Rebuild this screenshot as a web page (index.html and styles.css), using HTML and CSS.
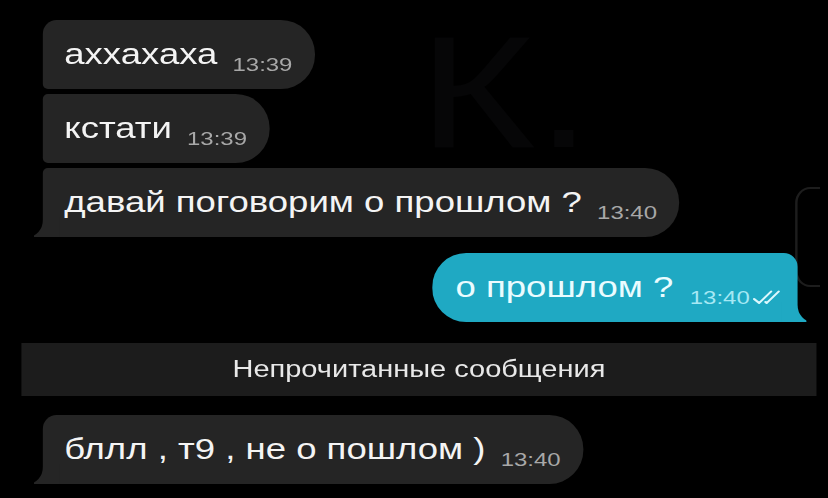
FILE: index.html
```html
<!DOCTYPE html>
<html>
	<head>
		<meta charset="utf-8">
		<title>Чат</title>
		<link rel="stylesheet" href="styles.css">
	</head>
	<body>
		<div class="chat">
			<div class="mark">К.</div>
			<div class="edge"></div>

			<div class="bubble in first">аххахаха<span class="time">13:39</span></div>
			<div class="bubble in middle">кстати<span class="time">13:39</span></div>
			<div class="bubble in last">давай поговорим о прошлом ?<span class="time">13:40</span></div>

			<div class="bubble out">о прошлом ?<span class="time">13:40</span><svg class="ticks" width="24" height="15" viewBox="0 0 24 15"><path d="M1.5 9 L5.5 13 L15 1.5 M10.5 12 L11.5 13 L21 1.5" fill="none" stroke="#dcf8fd" stroke-width="1.9" stroke-linecap="round" stroke-linejoin="round"/></svg></div>

			<div class="unread">Непрочитанные сообщения</div>

			<div class="bubble in single">бллл , т9 , не о пошлом )<span class="time">13:40</span></div>
		</div>
	</body>
</html>
```

FILE: styles.css
```css
*{
	margin: 0;
	padding: 0;
	box-sizing: border-box;
}
body{
	background: #000;
	overflow: hidden;
	font-family: "Liberation Sans", Arial, sans-serif;
}
/* the whole chat column is drawn wide */
.chat{
	width: 657px;
	padding: 20px 0 0 34px;
	display: flex;
	flex-direction: column;
	align-items: flex-start;
	position: relative;
	transform: scaleX(1.26);
	transform-origin: 0 0;
}
.mark{
	position: absolute;
	left: 332px;
	top: 0;
	font-size: 160px;
	color: #060607;
	z-index: 0;
}
.edge{
	position: absolute;
	left: 631px;
	top: 187px;
	width: 20px;
	height: 100px;
	border-left: 2px solid #1d1d1d;
	border-top: 2px solid #1d1d1d;
	border-bottom: 2px solid #1d1d1d;
	border-radius: 12px 0 0 12px / 16px 0 0 16px;
	z-index: 0;
}
.bubble{
	position: relative;
	z-index: 1;
	flex-shrink: 0;
	height: 69px;
	line-height: 69px;
	font-size: 29px;
	white-space: nowrap;
	color: #f4f4f4;
}
.bubble.in{
	background: #252525;
	padding: 0 18px 0 17px;
}
.bubble.first{
	border-radius: 11px 27px 27px 4px / 14px 34px 34px 5px;
}
.bubble.middle{
	margin-top: 5px;
	border-radius: 4px 27px 27px 4px / 5px 34px 34px 5px;
}
.bubble.last{
	margin-top: 5px;
	border-radius: 4px 27px 27px 0 / 5px 34px 34px 0;
}
.bubble.single{
	margin-top: 19px;
	border-radius: 11px 27px 27px 0 / 14px 34px 34px 0;
}
.time{
	display: inline-block;
	font-size: 19px;
	line-height: 1;
	margin-left: 12px;
	vertical-align: -7px;
	color: #a8a8a8;
}
/* tail at the bottom corner */
.bubble.last::before,
.bubble.single::before,
.bubble.out::before{
	content: "";
	position: absolute;
	bottom: 0;
	width: 20px;
	height: 20px;
}
.bubble.last::after,
.bubble.single::after,
.bubble.out::after{
	content: "";
	position: absolute;
	bottom: 0;
	width: 20px;
	height: 20px;
	background: #000;
}
.bubble.last::before,
.bubble.single::before{
	left: -7px;
	background: #252525;
}
.bubble.last::after,
.bubble.single::after{
	left: -20px;
	border-bottom-right-radius: 12px 17px;
}
.bubble.out{
	align-self: flex-end;
	margin: 16px 24px 0 0;
	padding: 0 12px 0 19px;
	background: #1fa9c3;
	color: #eafcff;
	border-radius: 27px 11px 0 27px / 34px 14px 0 34px;
}
.bubble.out::before{
	right: -7px;
	background: #1fa9c3;
}
.bubble.out::after{
	right: -20px;
	border-bottom-left-radius: 12px 17px;
}
.bubble.out .time{
	color: #a6e8f4;
	margin-left: 13px;
}
.ticks{
	margin-left: 2px;
	vertical-align: -8px;
}
.unread{
	align-self: stretch;
	flex-shrink: 0;
	margin: 21px 9px 0 -17px;
	height: 53px;
	line-height: 53px;
	background: #1c1c1c;
	text-align: center;
	font-size: 23px;
	color: #e8e8e8;
}
```
